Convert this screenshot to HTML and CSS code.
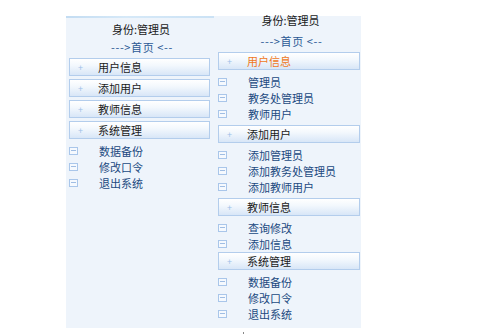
FILE: index.html
```html
<!DOCTYPE html>
<html lang="zh">
<head>
<meta charset="utf-8">
<title>菜单</title>
<link rel="stylesheet" href="styles.css">
</head>
<body>
<div class="frame">
  <div class="col col-left">
    <div class="stripe"></div>
    <div class="who">身份:管理员</div>
    <div class="home">---&gt;首页 &lt;--</div>
    <div class="btn"><span class="plus">+</span><span class="label">用户信息</span></div>
    <div class="btn"><span class="plus">+</span><span class="label">添加用户</span></div>
    <div class="btn"><span class="plus">+</span><span class="label">教师信息</span></div>
    <div class="btn"><span class="plus">+</span><span class="label">系统管理</span></div>
    <ul class="items items-left">
      <li><span class="box"></span>数据备份</li>
      <li><span class="box"></span>修改口令</li>
      <li><span class="box"></span>退出系统</li>
    </ul>
  </div>
  <div class="col col-right">
    <div class="who who-r">身份:管理员</div>
    <div class="home home-r">---&gt;首页 &lt;--</div>
    <div class="btn btn-r"><span class="plus">+</span><span class="label active">用户信息</span></div>
    <ul class="items">
      <li><span class="box"></span>管理员</li>
      <li><span class="box"></span>教务处管理员</li>
      <li><span class="box"></span>教师用户</li>
    </ul>
    <div class="btn btn-r"><span class="plus">+</span><span class="label">添加用户</span></div>
    <ul class="items">
      <li><span class="box"></span>添加管理员</li>
      <li><span class="box"></span>添加教务处管理员</li>
      <li><span class="box"></span>添加教师用户</li>
    </ul>
    <div class="btn btn-r"><span class="plus">+</span><span class="label">教师信息</span></div>
    <ul class="items items-tight">
      <li><span class="box"></span>查询修改</li>
      <li><span class="box"></span>添加信息</li>
    </ul>
    <div class="btn btn-r"><span class="plus">+</span><span class="label">系统管理</span></div>
    <ul class="items">
      <li><span class="box"></span>数据备份</li>
      <li><span class="box"></span>修改口令</li>
      <li><span class="box"></span>退出系统</li>
    </ul>
  </div>
</div>
<div class="dot"></div>
</body>
</html>
```

FILE: styles.css
```css
html, body {
  margin: 0;
  padding: 0;
  background: #ffffff;
}
body {
  width: 483px;
  height: 336px;
  overflow: hidden;
  font-family: "Noto Sans CJK SC", "Liberation Sans", sans-serif;
  font-size: 11px;
  color: #1a1a1a;
}
.frame {
  margin: 16px 0 0 66px;
  width: 295px;
  height: 312px;
  background: #eef4fb;
  display: flex;
}
.col {
  display: flex;
  flex-direction: column;
}
.col-left {
  width: 150px;
}
.col-right {
  width: 145px;
}
.stripe {
  height: 2px;
  width: 148px;
  background: linear-gradient(to right, #c3dcf2, #d6e9f8 40%, #cbe2f5);
}
.who {
  height: 14px;
  line-height: 14px;
  margin-top: 4px;
  text-align: center;
  color: #1a1a1a;
}
.home {
  height: 14px;
  line-height: 14px;
  margin-top: 4px;
  margin-bottom: 4px;
  text-align: center;
  color: #2a5894;
  padding-left: 2px;
  letter-spacing: 0.6px;
}
.who-r {
  margin-top: -3px;
  padding-left: 4px;
}
.home-r {
  margin-top: 7px;
  margin-bottom: 4px;
  padding-left: 6px;
}
.btn {
  height: 16px;
  margin: 0 0 3px 3px;
  width: 139px;
  border: 1px solid #b3cdec;
  background: linear-gradient(to bottom, #ffffff 0%, #f3f8fd 40%, #d8e6f7 100%);
  display: flex;
  align-items: center;
}
.btn-r {
  margin: 0 0 0 2px;
  width: 140px;
}
.plus {
  width: 24px;
  padding-left: 8px;
  box-sizing: border-box;
  font-size: 9px;
  line-height: 9px;
  color: #9ec0e8;
}
.label {
  padding-left: 4px;
  line-height: 16px;
  color: #1a1a1a;
}
.active {
  color: #f07822;
}
.items {
  list-style: none;
  margin: 1px 0 0 0;
  padding: 0;
}
.col-right .items {
  margin: 4px 0 3px 0;
}
.col-right .items-tight {
  margin-bottom: 0;
}
.items li {
  height: 16px;
  line-height: 16px;
  display: flex;
  align-items: center;
  color: #21497f;
}
.box {
  width: 7px;
  height: 6px;
  border: 1px solid #a9c6ea;
  margin: 0 21px 0 3px;
  position: relative;
  background: #f5f9fe;
}
.box::after {
  content: "";
  position: absolute;
  left: 1px;
  right: 1px;
  top: 2px;
  height: 1px;
  background: #9fbde3;
}
.col-right .box {
  margin-left: 2px;
}
.dot {
  width: 1px;
  height: 2px;
  background: #888;
  margin: 4px 0 0 243px;
}
```
